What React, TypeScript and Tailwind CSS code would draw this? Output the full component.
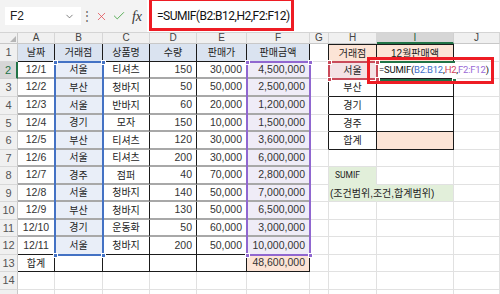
import { Check, ChevronDown, X } from "lucide-react";

const COL_LETTERS = ["A", "B", "C", "D", "E", "F", "G", "H", "I", "J"];

const rows: string[][] = [
  ["날짜", "거래점", "상품명", "수량", "판매가", "판매금액", "", "거래점", "12월판매액", ""],
  ["12/1", "서울", "티셔츠", "150", "30,000", "4,500,000", "", "서울", "", ""],
  ["12/2", "부산", "청바지", "50", "50,000", "2,500,000", "", "부산", "", ""],
  ["12/3", "서울", "반바지", "60", "20,000", "1,200,000", "", "경기", "", ""],
  ["12/4", "경기", "모자", "150", "10,000", "1,500,000", "", "경주", "", ""],
  ["12/5", "부산", "티셔츠", "120", "30,000", "3,600,000", "", "합계", "", ""],
  ["12/6", "서울", "티셔츠", "200", "30,000", "6,000,000", "", "", "", ""],
  ["12/7", "경주", "점퍼", "40", "70,000", "2,800,000", "", "SUMIF", "", ""],
  ["12/8", "서울", "청바지", "140", "50,000", "7,000,000", "", "(조건범위,조건,합계범위)", "", ""],
  ["12/9", "부산", "청바지", "130", "50,000", "6,500,000", "", "", "", ""],
  ["12/10", "경기", "운동화", "50", "60,000", "3,000,000", "", "", "", ""],
  ["12/11", "서울", "청바지", "200", "50,000", "10,000,000", "", "", "", ""],
  ["합계", "", "", "", "", "48,600,000", "", "", "", ""],
  ["", "", "", "", "", "", "", "", "", ""],
  ["", "", "", "", "", "", "", "", "", ""],
];

const hasHangul = (s: string) => /[가-힣]/.test(s);

function cellClass(r: number, c: number) {
  const t1 = r <= 13 && c <= 6;
  const t2 = r <= 6 && (c === 8 || c === 9);
  const green = (r === 8 && c === 8) || (r === 9 && (c === 8 || c === 9));
  const cls: string[] = ["flex items-center overflow-visible whitespace-nowrap"];

  // right edge
  if (r === 2 && c === 9) cls.push("border-r border-r-white");
  else if (t1 || t2 || (c === 7 && r <= 6)) cls.push("border-r border-r-[#1b1b1b]");
  else if (r === 9 && c === 8) cls.push("border-r border-r-[#e2efda]");
  else cls.push("border-r border-r-[#e1e1e1]");

  // bottom edge
  if (t1) {
    if (r === 1 || r >= 12) cls.push("border-b border-b-[#1b1b1b]");
    else cls.push("border-b-2 border-b-[#a8a8a8]");
  } else if (t2) cls.push("border-b border-b-[#1b1b1b]");
  else if (r === 8 && c === 8) cls.push("border-b border-b-[#e2efda]");
  else cls.push("border-b border-b-[#e1e1e1]");

  if (r === 1 && (c === 8 || c === 9)) cls.push("border-t border-t-[#1b1b1b]");

  // fills
  if (r === 1 && c <= 6) cls.push("bg-[#dae3f0]");
  else if ((r === 1 && (c === 8 || c === 9)) || (r === 6 && c === 9) || (r === 13 && c === 6)) cls.push("bg-[#fce4d6]");
  else if (c === 2 && r >= 2 && r <= 12) cls.push("bg-[#e9eef8]");
  else if (c === 6 && r >= 2 && r <= 12) cls.push("bg-[#efecf7]");
  else if (r === 2 && c === 8) cls.push("bg-[#f4e2e5]");
  else if (green) cls.push("bg-[#e2efda]");

  // alignment
  if (r >= 2 && r <= 13 && c >= 4 && c <= 6) cls.push("justify-end pr-[4px]");
  else if (((r === 8 || r === 9) && c === 8) || (r === 2 && c === 9)) cls.push("justify-start");
  else cls.push("justify-center");

  return cls.join(" ");
}

function FormulaBar() {
  return (
    <div className="flex h-[33px] border-b border-[#d4d4d4] bg-[#f3f3f3]">
      <div className="flex items-center">
        <div className="ml-[5px] flex h-[18px] w-[76px] items-center justify-between bg-white pl-[5px] pr-[6px] text-[12px] text-[#222]">
          <span>F2</span>
          <ChevronDown size={11} strokeWidth={1.6} color="#555" />
        </div>
        <div className="flex w-[11px] justify-center text-[12px] text-[#666]">⋮</div>
        <div className="flex w-[18px] justify-center">
          <X size={13} strokeWidth={1.4} color="#e0474c" />
        </div>
        <div className="flex w-[17px] justify-center">
          <Check size={14} strokeWidth={1.6} color="#4fa94d" />
        </div>
        <div className="flex w-[20px] justify-center font-['Liberation_Serif',serif] text-[14px] italic text-[#333]">
          fx
        </div>
      </div>
      <div className="flex flex-1 items-center bg-white pl-[10px] font-['Roboto',sans-serif] text-[12px] tracking-[-0.5px] text-[#111]">
        =SUMIF(B2:B12,H2,F2:F12)
      </div>
    </div>
  );
}

function Sheet() {
  return (
    <div className="grid grid-cols-[18px_37px_48px_47px_47px_50px_63px_19px_48px_77px_46px] grid-rows-[11px_18px_17px_18px_18px_17px_18px_17px_18px_17px_18px_17px_18px_17px_18px_17px]">
      {/* corner */}
      <div className="relative border-b border-r border-b-[#c8c8c8] border-r-[#c8c8c8] bg-[#f0f0f0]">
        <svg className="absolute bottom-[1px] right-[1px]" width="6" height="6" viewBox="0 0 6 6">
          <polygon points="6,0 6,6 0,6" fill="#b5b5b5" />
        </svg>
      </div>
      {COL_LETTERS.map((l) =>
        l === "I" ? (
          <div key={l} className="flex items-center justify-center border-b-2 border-r border-b-[#217346] border-r-[#d0d0d0] bg-[#d6d6d6] text-[10px] leading-none text-[#1d5a37]">
            {l}
          </div>
        ) : (
          <div key={l} className="flex items-center justify-center border-b border-r border-b-[#c8c8c8] border-r-[#d6d6d6] bg-[#f0f0f0] text-[10px] leading-none text-[#444]">
            {l}
          </div>
        )
      )}

      {rows.map((row, ri) => {
        const r = ri + 1;
        return [
          r === 2 ? (
            <div key={`h${r}`} className="flex items-center justify-center border-b border-r-2 border-b-[#d0d0d0] border-r-[#217346] bg-[#d6d6d6] text-[11px] text-[#217346]">
              {r}
            </div>
          ) : (
            <div key={`h${r}`} className="flex items-center justify-center border-b border-r border-b-[#d8d8d8] border-r-[#c8c8c8] bg-[#f0f0f0] text-[11px] text-[#555]">
              {r < 15 ? r : ""}
            </div>
          ),
          ...row.map((v, ci) => {
            const c = ci + 1;
            if (r === 2 && c === 9) {
              return (
                <div key={`${r}-${c}`} className={cellClass(r, c)}>
                  <span className="relative z-10 pl-[2px] font-['Roboto',sans-serif] text-[9.5px] tracking-[-0.2px] text-[#111]">
                    =SUMIF(<span className="text-[#3e6fc8]">B2:B12</span>,<span className="text-[#d2405a]">H2</span>,<span className="text-[#9a6ad6]">F2:F12</span>)
                  </span>
                </div>
              );
            }
            if (r === 8 && c === 8) {
              return (
                <div key={`${r}-${c}`} className={cellClass(r, c)}>
                  <span className="pl-[6px] font-['Roboto',sans-serif] text-[8.5px] text-[#222]">{v}</span>
                </div>
              );
            }
            if (r === 9 && c === 8) {
              return (
                <div key={`${r}-${c}`} className={cellClass(r, c)}>
                  <span className="relative z-10 pl-[1px] text-[10px] text-[#222]">{v}</span>
                </div>
              );
            }
            return (
              <div key={`${r}-${c}`} className={cellClass(r, c)}>
                {v && <span className={hasHangul(v) ? "text-[10px] text-[#222]" : "text-[10.5px] text-[#333]"}>{v}</span>}
              </div>
            );
          }),
        ];
      })}
    </div>
  );
}

function Corner({ x, y, color }: { x: number; y: number; color: string }) {
  return (
    <div
      className="absolute z-20 h-[5px] w-[5px] border border-white"
      style={{ left: x - 2, top: y - 2, backgroundColor: color }}
    />
  );
}

export default function App() {
  return (
    <div className="relative h-[294px] w-[500px] overflow-hidden bg-white font-['Liberation_Sans','Noto_Sans_CJK_KR',sans-serif] text-[#1a1a1a]">
      <FormulaBar />
      <Sheet />

      {/* formula reference highlights */}
      <div className="absolute left-[54px] top-[61px] z-20 h-[195px] w-[50px] border-2 border-[#4472c4]" />
      <Corner x={55} y={62} color="#4472c4" />
      <Corner x={103} y={62} color="#4472c4" />
      <Corner x={55} y={255} color="#4472c4" />
      <Corner x={103} y={255} color="#4472c4" />

      <div className="absolute left-[246px] top-[61px] z-20 h-[195px] w-[65px] border-2 border-[#9067d0]" />
      <Corner x={247} y={62} color="#9067d0" />
      <Corner x={310} y={62} color="#9067d0" />
      <Corner x={247} y={255} color="#9067d0" />
      <Corner x={310} y={255} color="#9067d0" />

      <div className="absolute left-[328px] top-[61px] z-20 h-[19px] w-[50px] border-2 border-[#c94a5a]" />
      <Corner x={329} y={62} color="#c94a5a" />
      <Corner x={377} y={62} color="#c94a5a" />
      <Corner x={329} y={79} color="#c94a5a" />
      <Corner x={377} y={79} color="#c94a5a" />

      {/* active cell I2 (edit mode, text runs past the right edge) */}
      <div className="absolute left-[376px] top-[61px] z-[5] h-[20px] w-[79px] border-y-2 border-l-2 border-[#217346]" />
      <Corner x={454} y={80} color="#217346" />

      {/* red annotation boxes */}
      <div className="absolute left-[149px] top-[-2px] z-30 h-[33px] w-[145px] border-[3px] border-[#ee1c24]" />
      <div className="absolute left-[367px] top-[57px] z-30 h-[27px] w-[127px] border-[3px] border-[#ee1c24]" />
    </div>
  );
}
